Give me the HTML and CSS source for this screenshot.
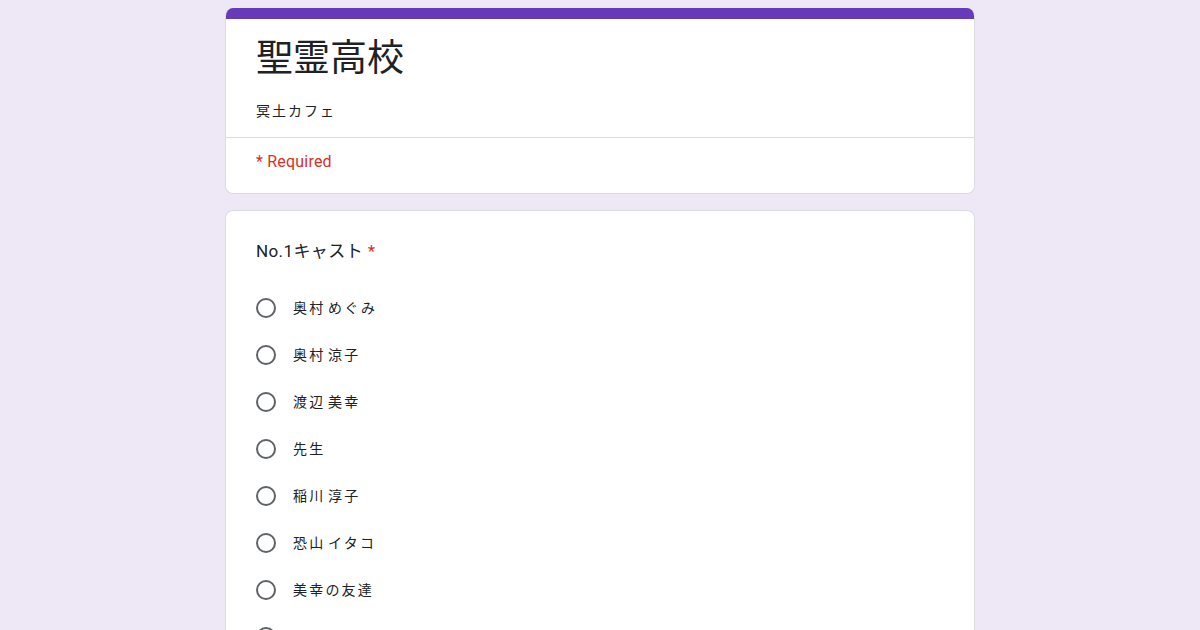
FILE: index.html
```html
<!DOCTYPE html>
<html lang="ja">
<head>
  <meta charset="UTF-8" />
  <meta name="viewport" content="width=device-width, initial-scale=1.0" />
  <title>聖霊高校</title>
  <link rel="stylesheet" href="styles.css">
</head>
<body>
  <div class="form">
    <div class="card head">
      <div class="bar"></div>
      <div class="head-main">
        <div class="title">聖霊高校</div>
        <div class="desc">冥土カフェ</div>
      </div>
      <div class="required">* Required</div>
    </div>

    <div class="card question">
      <div class="q-title">No.1キャスト <span class="star">*</span></div>
      <div class="options">
        <label class="option"><span class="radio"></span><span class="label">奥村 めぐみ</span></label>
        <label class="option"><span class="radio"></span><span class="label">奥村 涼子</span></label>
        <label class="option"><span class="radio"></span><span class="label">渡辺 美幸</span></label>
        <label class="option"><span class="radio"></span><span class="label">先生</span></label>
        <label class="option"><span class="radio"></span><span class="label">稲川 淳子</span></label>
        <label class="option"><span class="radio"></span><span class="label">恐山 イタコ</span></label>
        <label class="option"><span class="radio"></span><span class="label">美幸の友達</span></label>
        <label class="option"><span class="radio"></span><span class="label">一ツ目 小僧</span></label>
      </div>
    </div>
  </div>
</body>
</html>
```

FILE: styles.css
```css
body {
  margin: 0;
  background-color: #ede7f6;
  font-family: Roboto, "Noto Sans CJK JP", sans-serif;
  color: #202124;
}

.form {
  width: 750px;
  margin: 0 auto;
  padding-top: 8px;
}

.card {
  background-color: #fff;
  border: 1px solid #dadce0;
  border-radius: 8px;
  margin-bottom: 16px;
}

.head {
  border-top: none;
  overflow: hidden;
}

.bar {
  height: 11px;
  background-color: #673ab7;
}

.head-main {
  padding: 16px 30px 16px;
  border-bottom: 1px solid #dadce0;
}

.title {
  font-size: 37px;
  line-height: 48px;
}

.desc {
  margin-top: 18px;
  font-size: 14px;
  line-height: 20px;
  letter-spacing: 2px;
}

.required {
  padding: 14px 30px 21px;
  font-size: 16px;
  line-height: 20px;
  letter-spacing: 0.2px;
  color: #d93025;
}

.question {
  padding: 28px 30px 0;
  height: 430px;
}

.q-title {
  font-size: 17px;
  line-height: 24px;
  letter-spacing: 0.4px;
  margin-bottom: 21px;
}

.star {
  color: #d93025;
}

.option {
  display: flex;
  align-items: center;
  height: 47px;
}

.radio {
  width: 16px;
  height: 16px;
  border: 2px solid #5f6368;
  border-radius: 50%;
  margin-right: 17px;
}

.label {
  font-size: 14px;
  line-height: 20px;
  letter-spacing: 2.2px;
  word-spacing: -3px;
}
```
